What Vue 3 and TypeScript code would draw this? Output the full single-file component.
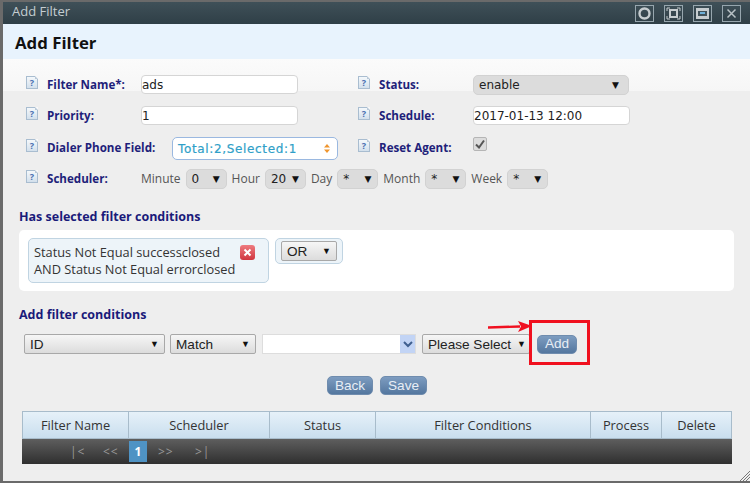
<script setup lang="ts">
interface Col { name: string; width: number }
const cols: Col[] = [
  { name: 'Filter Name', width: 107 },
  { name: 'Scheduler', width: 141 },
  { name: 'Status', width: 106 },
  { name: 'Filter Conditions', width: 215 },
  { name: 'Process', width: 71 },
  { name: 'Delete', width: 70 },
]
const sched = [
  { label: 'Minute', value: '0' },
  { label: 'Hour', value: '20' },
  { label: 'Day', value: '*' },
  { label: 'Month', value: '*' },
  { label: 'Week', value: '*' },
]
</script>

<template>
  <div class="page">
    <div class="win">
      <div class="titlebar">
        <span class="title">Add Filter</span>
        <div class="winbtns">
          <span class="wb"><svg width="15" height="13" viewBox="0 0 15 13"><circle cx="7.5" cy="6.5" r="5" fill="none" stroke="#c6cccf" stroke-width="2.4"/></svg></span>
          <span class="wb"><svg width="15" height="13" viewBox="0 0 15 13"><rect x="4" y="3" width="7" height="7" fill="none" stroke="#c6cccf" stroke-width="2"/><path d="M1 4V1h3M11 1h3v3M14 9v3h-3M4 12H1V9" fill="none" stroke="#c6cccf"/></svg></span>
          <span class="wb"><svg width="15" height="13" viewBox="0 0 15 13"><rect x="1" y="1" width="13" height="11" fill="#c6cccf"/><rect x="3" y="4" width="9" height="5" fill="#41525a"/><rect x="5" y="5" width="5" height="2" fill="#6fb0d8"/></svg></span>
          <span class="wb"><svg width="15" height="13" viewBox="0 0 15 13"><path d="M3.5 2.5l8 8M11.5 2.5l-8 8" stroke="#b9c2c6" stroke-width="1.5"/></svg></span>
        </div>
      </div>
      <div class="head">Add Filter</div>
      <div class="body">
        <div class="form">
          <div class="field">
            <span class="help">?</span><label>Filter Name*:</label>
            <input class="inp" value="ads" />
          </div>
          <div class="field">
            <span class="help">?</span><label>Status:</label>
            <div class="sel flat wide"><span>enable</span><i>▼</i></div>
          </div>
          <div class="field">
            <span class="help">?</span><label>Priority:</label>
            <input class="inp" value="1" />
          </div>
          <div class="field">
            <span class="help">?</span><label>Schedule:</label>
            <input class="inp" value="2017-01-13 12:00" />
          </div>
          <div class="field">
            <span class="help">?</span><label>Dialer Phone Field:</label>
            <div class="multi">
              <span>Total:2,Selected:1</span>
              <svg width="6" height="9" viewBox="0 0 6 9"><path d="M3 0l3 3.5H0zM3 9l3-3.5H0z" fill="#f0962e"/></svg>
            </div>
          </div>
          <div class="field">
            <span class="help">?</span><label>Reset Agent:</label>
            <span class="check"><svg width="10" height="10" viewBox="0 0 10 10"><path d="M1 5.5l3 3 5-7" fill="none" stroke="#555" stroke-width="2"/></svg></span>
          </div>
          <div class="field full">
            <span class="help">?</span><label>Scheduler:</label>
            <div class="sched">
              <template v-for="s in sched" :key="s.label">
                <span class="slabel">{{ s.label }}</span>
                <div class="sel flat tiny"><span>{{ s.value }}</span><i>▼</i></div>
              </template>
            </div>
          </div>
        </div>

        <h3 class="sect first">Has selected filter conditions</h3>
        <div class="panel">
          <div class="tag">
            <div class="tagline">
              <span>Status Not Equal successclosed</span>
              <span class="del"><svg width="9" height="9" viewBox="0 0 9 9"><path d="M1.5 1.5l6 6M7.5 1.5l-6 6" stroke="#fff" stroke-width="2"/></svg></span>
            </div>
            <div>AND Status Not Equal errorclosed</div>
          </div>
          <div class="orwrap">
            <div class="sel sys or"><span>OR</span><i>▼</i></div>
          </div>
        </div>

        <h3 class="sect second">Add filter conditions</h3>
        <div class="addrow">
          <div class="sel sys id"><span>ID</span><i>▼</i></div>
          <div class="sel sys match"><span>Match</span><i>▼</i></div>
          <div class="combo">
            <span class="combobtn"><svg width="10" height="7" viewBox="0 0 10 7"><path d="M1 1l4 4 4-4" fill="none" stroke="#3f5f8f" stroke-width="2"/></svg></span>
          </div>
          <div class="sel sys please"><span>Please Select</span><i>▼</i></div>
          <button class="btn add">Add</button>
        </div>

        <div class="actions">
          <button class="btn back">Back</button>
          <button class="btn save">Save</button>
        </div>

        <div class="grid">
          <div class="ghead">
            <div v-for="c in cols" :key="c.name" class="gcell" :style="{ width: c.width + 'px' }">{{ c.name }}</div>
          </div>
          <div class="pager">
            <span class="pg p1">|&lt;</span>
            <span class="pg p2">&lt;&lt;</span>
            <span class="cur">1</span>
            <span class="pg p3">&gt;&gt;</span>
            <span class="pg p4">&gt;|</span>
          </div>
        </div>
      </div>
      <svg class="grip" width="10" height="10" viewBox="0 0 10 10"><path d="M0 10L10 0M3 10l7-7M6 10l4-4" stroke="#777" stroke-width="1"/></svg>
    </div>

    <div class="redbox"></div>
    <svg class="arrow" width="46" height="14" viewBox="0 0 46 14"><path d="M0 7.5L32 6.5" stroke="#f01020" stroke-width="2.4"/><path d="M30 1l14 5L30 12l3-5.5z" fill="#f01020"/></svg>
  </div>
</template>

<style>
html, body { margin: 0; background: #555; }
</style>

<style scoped>
.page {
  position: relative;
  width: 750px;
  height: 483px;
  overflow: hidden;
  background: #6a6a6a;
  padding: 2px 0 0 3px;
  box-sizing: border-box;
  font-family: "Open Sans", "DejaVu Sans", sans-serif;
  font-size: 12.8px;
  color: #333;
}
.win {
  position: relative;
  width: 747px;
  height: 479px;
  background: #eee;
  display: flex;
  flex-direction: column;
}
.titlebar {
  height: 22px;
  flex: none;
  background: linear-gradient(#3f5058, #2f3f47);
  display: flex;
  align-items: center;
  justify-content: space-between;
  padding: 0 9px;
}
.title { color: #c5cdd1; font-size: 13px; margin-top: -4px; }
.winbtns { display: flex; gap: 10px; }
.wb {
  width: 17px;
  height: 15px;
  border: 1px solid #97a6ae;
  display: flex;
  align-items: center;
  justify-content: center;
}
.head {
  height: 35px;
  flex: none;
  background: #e8f3fd;
  font-size: 16.8px;
  font-weight: 700;
  color: #111;
  line-height: 38px;
  padding-left: 12px;
  box-sizing: border-box;
}
.body {
  flex: 1;
  background: linear-gradient(#fbfbfb 0, #f6f6f6 32px, #eee 32px);
  padding: 10px 0 0 16px;
  box-sizing: border-box;
}
.form {
  display: grid;
  grid-template-columns: 332px 1fr;
  grid-auto-rows: 31.3px;
  padding-left: 7px;
}
.field { display: flex; align-items: center; }
.field.full { grid-column: 1 / 3; }
.help {
  position: relative;
  width: 12px;
  height: 13px;
  flex: none;
  margin-right: 9px;
  border: 1px solid #a9bdd0;
  background: linear-gradient(#f4f8fb, #d3e0ec);
  box-sizing: border-box;
  color: #4a6fb0;
  font-size: 9px;
  font-weight: 700;
  line-height: 12px;
  text-align: center;
  margin-top: -4px;
}
.help::after {
  content: "";
  position: absolute;
  right: -1px;
  top: -1px;
  width: 0;
  height: 0;
  border-style: solid;
  border-width: 0 3px 3px 0;
  border-color: transparent #f8f8f8 #b9c9d8 transparent;
}
label {
  width: 94px;
  flex: none;
  font-weight: 700;
  color: #1f1f7a;
  font-size: 11.6px;
  white-space: nowrap;
}
.inp {
  width: 157px;
  height: 19px;
  box-sizing: border-box;
  border: 1px solid #d5d5d5;
  border-radius: 4px;
  background: #fff;
  padding: 0;
  font: 12px "DejaVu Sans", sans-serif;
  color: #222;
  outline: none;
}
.sel {
  display: flex;
  align-items: center;
  justify-content: space-between;
  box-sizing: border-box;
}
.sel i { font-style: normal; font-size: 9px; color: #111; }
.flat {
  background: #dcdcdc;
  border: 1px solid #d2d2d2;
  border-radius: 5px;
  color: #222;
  font-family: "DejaVu Sans", sans-serif;
  font-size: 12px;
}
.wide { width: 156px; height: 20px; padding: 0 9px 0 5px; }
.tiny { width: 41px; height: 20px; padding: 0 6px 0 5px; }
.sys {
  background: linear-gradient(#f6f6f6, #dcdcdc);
  border: 1px solid #a8a8a8;
  border-radius: 2px;
  height: 20px;
  font-family: "Liberation Sans", Arial, sans-serif;
  font-size: 13.6px;
  color: #222;
  padding: 0 5px;
}
.multi {
  width: 166px;
  height: 23px;
  margin-left: 31px;
  margin-top: 3px;
  box-sizing: border-box;
  border: 1px solid #9ab8e0;
  border-radius: 5px;
  background: #fff;
  color: #2f9fc8;
  font-family: "DejaVu Sans", sans-serif;
  font-size: 12px;
  letter-spacing: 0.65px;
  -webkit-text-stroke: 0.2px #2f9fc8;
  display: flex;
  align-items: center;
  justify-content: space-between;
  padding: 0 7px 0 5px;
}
.check {
  width: 12px;
  height: 12px;
  border: 1px solid #b5b5b5;
  border-radius: 2px;
  background: #dcdcdc;
  margin-top: -6px;
  display: flex;
  align-items: center;
  justify-content: center;
}
.sched { display: flex; align-items: center; gap: 5px; }
.slabel { color: #555; font-size: 12px; }
.sect {
  margin: 0;
  font-size: 12.5px;
  font-weight: 700;
  color: #1a1a7a;
  line-height: 16px;
}
.sect.first { margin-top: 15px; }
.sect.second { margin-top: 16px; }
.panel {
  width: 715px;
  height: 61px;
  margin-top: 5px;
  background: #fff;
  border-radius: 5px;
  box-sizing: border-box;
  padding: 8px 9px;
  display: flex;
  align-items: flex-start;
  gap: 6px;
}
.tag {
  width: 241px;
  height: 45px;
  box-sizing: border-box;
  background: #edf4f9;
  border: 1px solid #c0d4e2;
  border-radius: 5px;
  padding: 5px 5px;
  line-height: 17px;
  color: #333;
}
.tagline { display: flex; align-items: center; justify-content: space-between; padding-right: 8px; }
.del {
  width: 15px;
  height: 15px;
  border-radius: 3px;
  background: linear-gradient(#ee7b80, #d0363f);
  display: flex;
  align-items: center;
  justify-content: center;
}
.orwrap {
  width: 68px;
  height: 26px;
  box-sizing: border-box;
  background: #edf4f9;
  border: 1px solid #c0d4e2;
  border-radius: 5px;
  padding: 2px 5px;
}
.or { width: 56px; padding: 0 5px; }
.addrow {
  display: flex;
  align-items: center;
  margin: 11px 0 0 5px;
  height: 20px;
}
.id { width: 141px; }
.match { width: 86px; margin-left: 5px; }
.combo {
  width: 154px;
  height: 20px;
  margin-left: 6px;
  box-sizing: border-box;
  background: #fff;
  border: 1px solid #ddd;
  display: flex;
  justify-content: flex-end;
}
.combobtn {
  width: 15px;
  background: #c2d4f5;
  display: flex;
  align-items: center;
  justify-content: center;
}
.please { width: 108px; margin-left: 6px; padding: 0 3px 0 5px; }
.btn {
  height: 19px;
  box-sizing: border-box;
  border: 1px solid #6f8cae;
  border-radius: 5px;
  background: linear-gradient(#7d9cc0, #54779f);
  color: #e8eef5;
  font-family: "Liberation Sans", Arial, sans-serif;
  font-size: 13.6px;
  padding: 0;
  line-height: 16px;
}
.add { width: 40px; margin-left: 7px; }
.actions {
  display: flex;
  margin: 22px 0 0 308px;
  gap: 7px;
}
.back { width: 46px; }
.save { width: 47px; }
.grid { width: 710px; margin: 16px 0 0 3px; }
.ghead {
  display: flex;
  height: 28px;
  box-sizing: border-box;
  border-top: 1px solid #a8bccb;
}
.gcell {
  flex: none;
  box-sizing: border-box;
  background: linear-gradient(#e6f1f9, #c9deee);
  border-right: 1px solid #a8bccb;
  border-bottom: 1px solid #a8bccb;
  text-align: center;
  line-height: 26px;
  color: #333;
}
.gcell:first-child { border-left: 1px solid #a8bccb; }
.pager {
  position: relative;
  height: 25px;
  background: linear-gradient(#5e5e5e, #2f2f2f);
  color: #999;
  display: flex;
  align-items: center;
  font-size: 12px;
}
.pg { letter-spacing: 1px; line-height: 21px; white-space: nowrap; }
.p1 { margin-left: 48px; width: 12px; }
.p2 { margin-left: 21px; width: 15px; }
.p3 { margin-left: 11px; width: 15px; }
.p4 { margin-left: 22px; }
.cur {
  width: 18px;
  height: 21px;
  margin-left: 11px;
  background: #4f93c4;
  color: #fff;
  font-weight: 700;
  text-align: center;
  line-height: 21px;
}
.grip { position: absolute; right: 0; bottom: 0; }
.redbox {
  position: absolute;
  left: 529px;
  top: 320px;
  width: 61px;
  height: 45px;
  box-sizing: border-box;
  border: 3px solid #f0101e;
}
.arrow { position: absolute; left: 488px; top: 320px; }
</style>
